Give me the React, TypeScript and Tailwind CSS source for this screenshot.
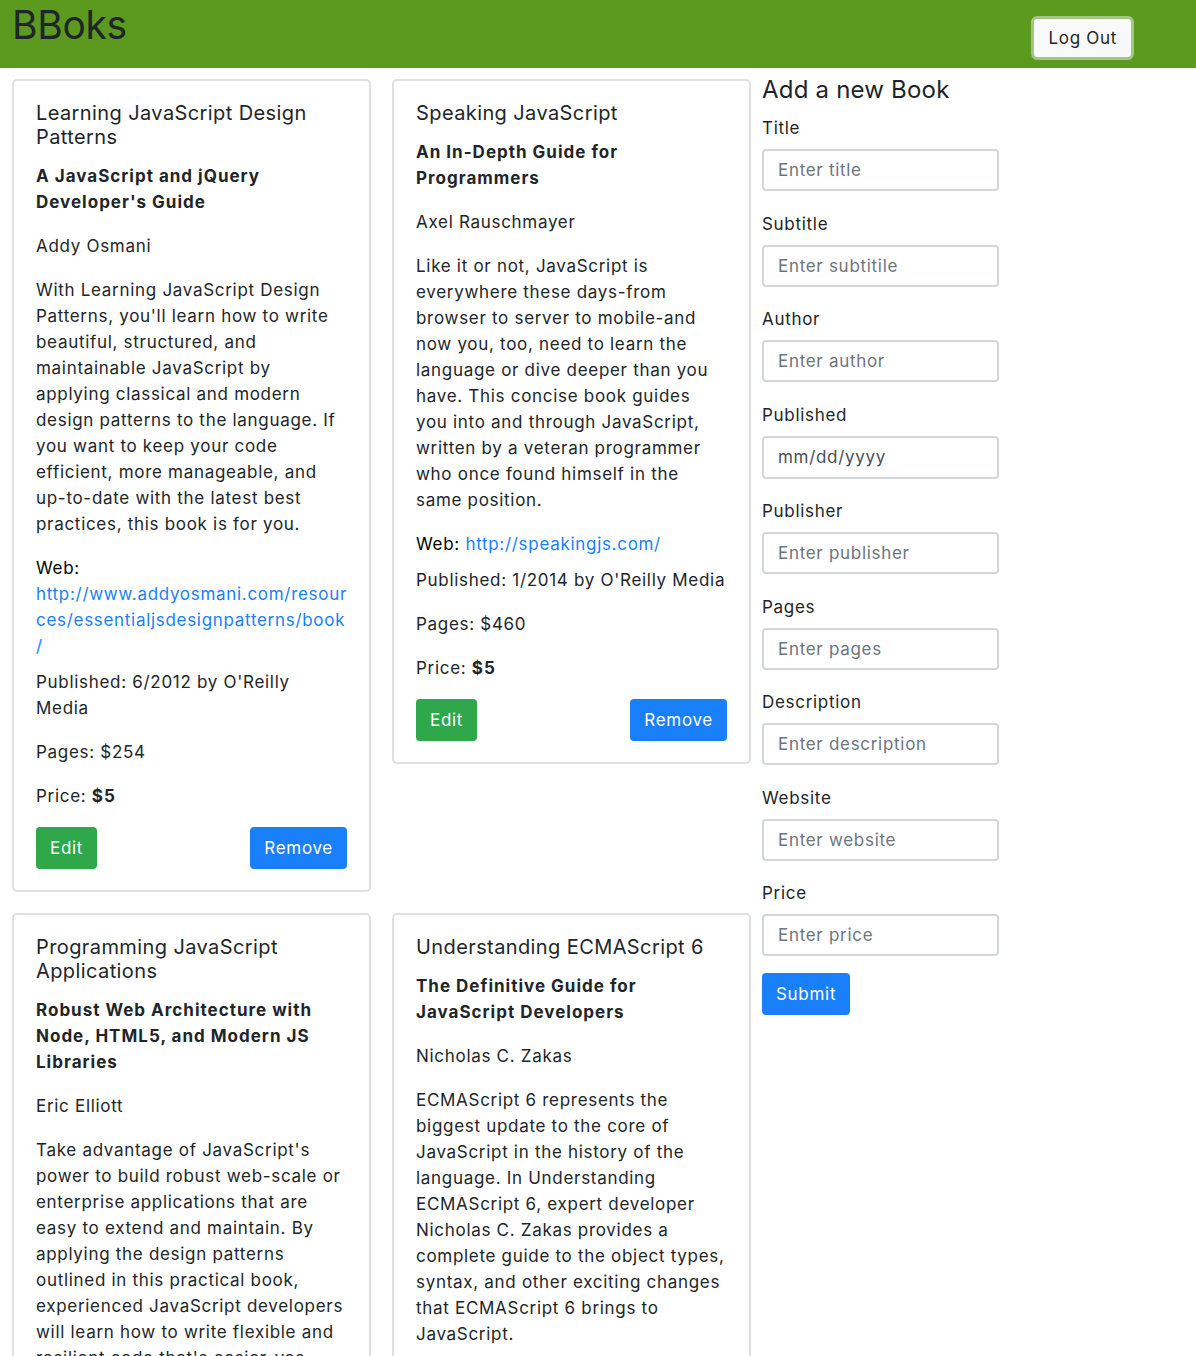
import React from "react";

const books = [
  {
    title: "Learning JavaScript Design Patterns",
    subtitle: "A JavaScript and jQuery Developer's Guide",
    author: "Addy Osmani",
    description:
      "With Learning JavaScript Design Patterns, you'll learn how to write beautiful, structured, and maintainable JavaScript by applying classical and modern design patterns to the language. If you want to keep your code efficient, more manageable, and up-to-date with the latest best practices, this book is for you.",
    website: "http://www.addyosmani.com/resources/essentialjsdesignpatterns/book/",
    published: "6/2012",
    publisher: "O'Reilly Media",
    pages: 254,
    price: 5,
  },
  {
    title: "Speaking JavaScript",
    subtitle: "An In-Depth Guide for Programmers",
    author: "Axel Rauschmayer",
    description:
      "Like it or not, JavaScript is everywhere these days-from browser to server to mobile-and now you, too, need to learn the language or dive deeper than you have. This concise book guides you into and through JavaScript, written by a veteran programmer who once found himself in the same position.",
    website: "http://speakingjs.com/",
    published: "1/2014",
    publisher: "O'Reilly Media",
    pages: 460,
    price: 5,
  },
  {
    title: "Programming JavaScript Applications",
    subtitle: "Robust Web Architecture with Node, HTML5, and Modern JS Libraries",
    author: "Eric Elliott",
    description:
      "Take advantage of JavaScript's power to build robust web-scale or enterprise applications that are easy to extend and maintain. By applying the design patterns outlined in this practical book, experienced JavaScript developers will learn how to write flexible and resilient code that's easier-yes, easier-to work with as your code base grows.",
    website: "http://chimera.labs.oreilly.com/books/1234000000262/index.html",
    published: "7/2014",
    publisher: "O'Reilly Media",
    pages: 254,
    price: 5,
  },
  {
    title: "Understanding ECMAScript 6",
    subtitle: "The Definitive Guide for JavaScript Developers",
    author: "Nicholas C. Zakas",
    description:
      "ECMAScript 6 represents the biggest update to the core of JavaScript in the history of the language. In Understanding ECMAScript 6, expert developer Nicholas C. Zakas provides a complete guide to the object types, syntax, and other exciting changes that ECMAScript 6 brings to JavaScript.",
    website: "https://leanpub.com/understandinges6/read",
    published: "10/2016",
    publisher: "No Starch Press",
    pages: 352,
    price: 5,
  },
];

const fields = [
  { label: "Title", placeholder: "Enter title" },
  { label: "Subtitle", placeholder: "Enter subtitile" },
  { label: "Author", placeholder: "Enter author" },
  { label: "Published", placeholder: "mm/dd/yyyy" },
  { label: "Publisher", placeholder: "Enter publisher" },
  { label: "Pages", placeholder: "Enter pages" },
  { label: "Description", placeholder: "Enter description" },
  { label: "Website", placeholder: "Enter website" },
  { label: "Price", placeholder: "Enter price" },
];

function BookCard({ book }: any) {
  return (
    <div className="border-2 border-[#e0e0e0] rounded-[5px] px-[22px] pt-[20px] pb-[21px]">
      <h5 className="text-[20px] leading-[24px] tracking-[0.4px] mb-[14px]">
        {book.title}
      </h5>
      <h6 className="font-bold tracking-[1px] mb-[18px]">{book.subtitle}</h6>
      <p className="mb-[18px]">{book.author}</p>
      <p className="mb-[18px]">{book.description}</p>
      <p className="mb-[10px] break-words text-black">
        Web:{" "}
        <a href="#" className="text-[#1a7ffb]">
          {book.website}
        </a>
      </p>
      <p className="mb-[18px]">
        Published: {book.published} by {book.publisher}
      </p>
      <p className="mb-[18px]">Pages: ${book.pages}</p>
      <p className="mb-[18px]">
        Price: <b className="tracking-[1px]">${book.price}</b>
      </p>
      <div className="flex justify-between">
        <button className="h-[42px] px-[14px] rounded-[4px] bg-[#2ea84a] text-white">
          Edit
        </button>
        <button className="h-[42px] px-[14px] rounded-[4px] bg-[#1a7ffb] text-white">
          Remove
        </button>
      </div>
    </div>
  );
}

export default function App() {
  return (
    <div
      className="min-h-[1356px] bg-white text-[#212529] text-[17px] leading-[26px] tracking-[0.7px]"
      style={{ fontFamily: "Inter, 'Liberation Sans', sans-serif" }}
    >
      <div className="h-[68px] bg-[#5b9a1e] flex justify-between items-start">
        <h1 className="text-[39px] leading-[50px] ml-[12px] tracking-[-0.3px]">
          BBoks
        </h1>
        <button className="mt-[16px] mr-[62px] h-[44px] px-[14px] rounded-[6px] bg-[#f8f9fa] border-[3px] border-[#a3c585] text-[#212529]">
          Log Out
        </button>
      </div>

      <div className="flex items-start">
        <div className="grid grid-cols-[359px_359px] gap-x-[21px] gap-y-[21px] items-start ml-[12px] mt-[11px]">
          {books.map((b, i) => (
            <BookCard key={i} book={b} />
          ))}
        </div>

        <form className="ml-[11px] mt-[7px] w-[237px]">
          <h4 className="text-[24px] leading-[30px] tracking-[0.2px] mb-[10px]">
            Add a new Book
          </h4>
          {fields.map((f) => (
            <div
              key={f.label}
              className={f.label === "Price" ? "mb-[17px]" : "mb-[19.5px]"}
            >
              <label className="block mb-[8px]">{f.label}</label>
              <input
                placeholder={f.placeholder}
                className={
                  f.label === "Published"
                    ? "block w-full h-[43px] px-[14px] border-2 border-[#d3d7db] rounded-[4px] placeholder-[#495057] outline-none"
                    : "block w-full h-[42px] px-[14px] border-2 border-[#d3d7db] rounded-[4px] placeholder-[#6c757d] outline-none"
                }
              />
            </div>
          ))}
          <button
            type="button"
            className="h-[42px] px-[14px] rounded-[4px] bg-[#1a7ffb] text-white"
          >
            Submit
          </button>
        </form>
      </div>
    </div>
  );
}
